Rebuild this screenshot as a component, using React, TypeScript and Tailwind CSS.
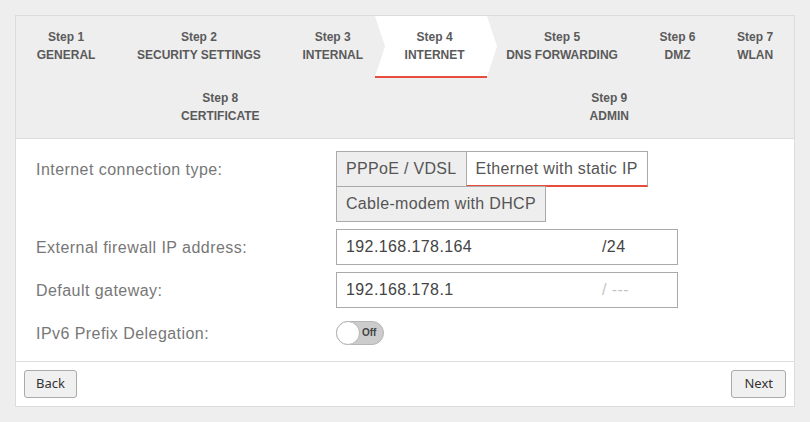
import React from "react";

type Step = { n: number; label: string; active?: boolean };

const rowOne: Step[] = [
  { n: 1, label: "GENERAL" },
  { n: 2, label: "SECURITY SETTINGS" },
  { n: 3, label: "INTERNAL" },
  { n: 4, label: "INTERNET", active: true },
  { n: 5, label: "DNS FORWARDING" },
  { n: 6, label: "DMZ" },
  { n: 7, label: "WLAN" },
];

const rowTwo: Step[] = [
  { n: 8, label: "CERTIFICATE" },
  { n: 9, label: "ADMIN" },
];

function StepItem({ step }: { step: Step }) {
  return (
    <div className="relative h-[61px] pt-[12px] text-center">
      {step.active && (
        <>
          {/* chevron-shaped highlight behind the current step */}
          <svg
            className="absolute top-0 left-[-30px] h-[61px] w-[122px]"
            viewBox="0 0 122 61"
            preserveAspectRatio="none"
          >
            <polygon points="0,0 112,0 122,30.5 112,61 0,61 10,30.5" fill="#ffffff" />
          </svg>
          <div className="absolute left-[-30px] top-[60px] h-[2px] w-[112px] bg-[#e74c3c]" />
        </>
      )}
      <div className="relative text-[12px] leading-[18px] font-bold text-[#5a5a5a] whitespace-nowrap">
        <div>Step {step.n}</div>
        <div>{step.label}</div>
      </div>
    </div>
  );
}

function Label({ children }: { children: React.ReactNode }) {
  return (
    <div className="w-[300px] shrink-0 h-[36px] flex items-center pt-[1px] text-[16px] tracking-[0.45px] text-[#777]">
      {children}
    </div>
  );
}

function IpField({ value, suffix, muted }: { value: string; suffix: string; muted?: boolean }) {
  return (
    <div className="w-[342px] h-[36px] border border-[#aaa] bg-white flex items-center pl-[9px] text-[16px] tracking-[0.4px]">
      <span className="flex-1 text-[#444]">{value}</span>
      <span className={"w-[75px] " + (muted ? "text-[#c4c4c4]" : "text-[#444]")}>{suffix}</span>
    </div>
  );
}

export default function App() {
  return (
    <div
      className="min-h-screen bg-[#eeeeee] p-[15px]"
      style={{ fontFamily: '"Liberation Sans", Arial, sans-serif' }}
    >
      <div className="w-[780px] border border-[#dcdcdc] bg-white">
        {/* wizard steps */}
        <div className="bg-[#eeeeee] border-b border-[#dcdcdc]">
          <div className="flex justify-around">
            {rowOne.map((s) => (
              <StepItem key={s.n} step={s} />
            ))}
          </div>
          <div className="flex justify-around">
            {rowTwo.map((s) => (
              <StepItem key={s.n} step={s} />
            ))}
          </div>
        </div>

        {/* form */}
        <div className="flex flex-col gap-[7px] pl-[20px] pt-[12px] pb-[10px]">
          <div className="flex items-start">
            <Label>Internet connection type:</Label>
            <div className="w-[342px] flex flex-wrap text-[16px] tracking-[0.32px]">
              <div className="h-[36px] border border-[#aaa] bg-[#eeeeee] px-[9px] flex items-center text-[#555]">
                PPPoE / VDSL
              </div>
              <div className="h-[36px] -ml-px border border-[#aaa] border-b-2 border-b-[#e74c3c] bg-white px-[9px] flex items-center text-[#555]">
                Ethernet with static IP
              </div>
              <div className="h-[36px] -mt-px border border-[#aaa] bg-[#eeeeee] px-[9px] flex items-center text-[#555]">
                Cable-modem with DHCP
              </div>
            </div>
          </div>

          <div className="flex items-center">
            <Label>External firewall IP address:</Label>
            <IpField value="192.168.178.164" suffix="/24" />
          </div>

          <div className="flex items-center">
            <Label>Default gateway:</Label>
            <IpField value="192.168.178.1" suffix="/ ---" muted />
          </div>

          <div className="flex items-center">
            <Label>IPv6 Prefix Delegation:</Label>
            <div className="relative w-[48px] h-[24px] rounded-full bg-[#cccccc] border border-[#b5b5b5]">
              <div className="absolute left-[-1px] top-[-1px] w-[24px] h-[24px] rounded-full bg-white border border-[#b5b5b5]" />
              <span className="absolute left-[25px] top-[4px] text-[10px] leading-[14px] font-bold text-[#444]">
                Off
              </span>
            </div>
          </div>
        </div>

        {/* footer */}
        <div
          className="flex justify-between border-t border-[#dcdcdc] px-[8px] py-[8px]"
          style={{ fontFamily: '"Noto Sans", "Open Sans", sans-serif' }}
        >
          <button className="h-[28px] px-[11px] border border-[#aaa] rounded-[3px] bg-[#f0f0f0] text-[13px] text-[#333]">
            Back
          </button>
          <button className="h-[28px] px-[12px] border border-[#aaa] rounded-[3px] bg-[#f0f0f0] text-[13px] text-[#333]">
            Next
          </button>
        </div>
      </div>
    </div>
  );
}
